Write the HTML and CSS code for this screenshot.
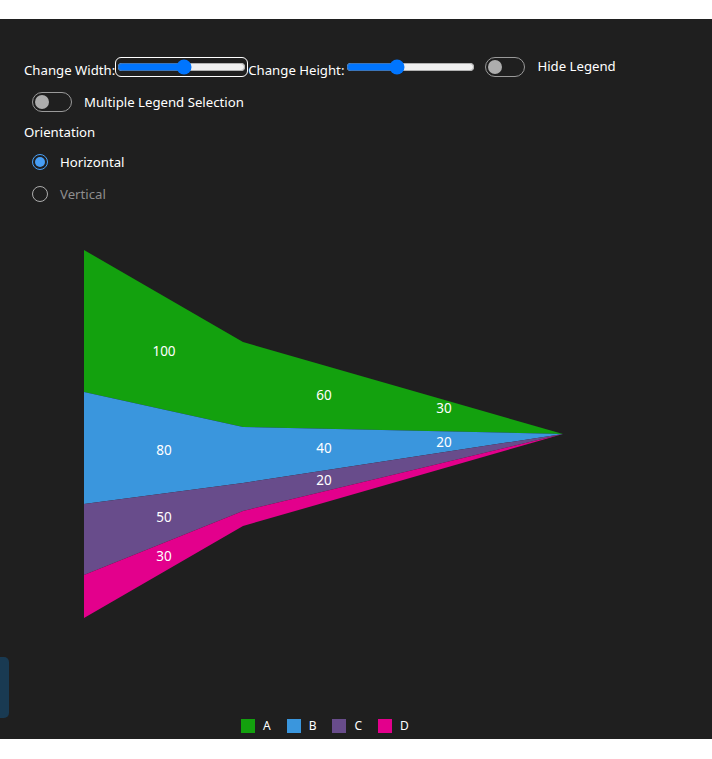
FILE: index.html
```html
<!DOCTYPE html>
<html>
<head>
<meta charset="utf-8">
<link rel="stylesheet" href="styles.css">
</head>
<body>
<div class="app">
  <div class="controls">
    <div class="row row-first">
      <span class="lbl lbl-low">Change Width:</span>
      <input type="range" class="range range-focus" min="0" max="100" value="52">
      <span class="lbl lbl-low">Change Height:</span>
      <input type="range" class="range" min="0" max="100" value="38">
      <span class="toggle toggle-a"><span class="knob"></span></span>
      <span class="lbl toggle-lbl lbl-up">Hide Legend</span>
    </div>
    <div class="row row-second">
      <span class="toggle toggle-b"><span class="knob"></span></span>
      <span class="lbl toggle-lbl">Multiple Legend Selection</span>
    </div>
    <div class="orient">Orientation</div>
    <div class="radios">
      <div class="radio-row"><span class="radio checked"><span class="dot"></span></span><span class="lbl">Horizontal</span></div>
      <div class="radio-row"><span class="radio"></span><span class="lbl muted">Vertical</span></div>
    </div>
  </div>
  <svg class="chart" width="712" height="490" viewBox="0 0 712 490">
    <polygon points="84,30 243,122 563,214 243,207 84,172" fill="#13a10e"/>
    <polygon points="84,172 243,207 563,214 243,263 84,284" fill="#3a96dd"/>
    <polygon points="84,284 243,263 563,214 243,291 84,355" fill="#684c8b"/>
    <polygon points="84,355 243,291 563,214 243,306 84,398" fill="#e3008c"/>
    <g class="vals">
      <text x="164" y="131">100</text>
      <text x="164" y="230">80</text>
      <text x="164" y="297">50</text>
      <text x="164" y="336">30</text>
      <text x="324" y="175">60</text>
      <text x="324" y="228">40</text>
      <text x="324" y="260">20</text>
      <text x="444" y="188">30</text>
      <text x="444" y="222">20</text>
    </g>
  </svg>
  <div class="legend">
    <div class="leg"><span class="sw sw-a"></span><span>A</span></div>
    <div class="leg"><span class="sw sw-b"></span><span>B</span></div>
    <div class="leg"><span class="sw sw-c"></span><span>C</span></div>
    <div class="leg"><span class="sw sw-d"></span><span>D</span></div>
  </div>
  <div class="side-tab"></div>
</div>
</body>
</html>
```
FILE: styles.css
```css
html, body {
  margin: 0;
  padding: 0;
  background: #ffffff;
}
body {
  font-family: "Noto Sans", "Open Sans", sans-serif;
  font-size: 13.2px;
  color: #ffffff;
}
.app {
  position: relative;
  margin-top: 19px;
  height: 720px;
  background: #1f1f1f;
  overflow: hidden;
}
.controls {
  padding: 38px 24px 0 24px;
}
.row {
  display: flex;
  align-items: center;
  height: 20px;
}
.lbl {
  white-space: nowrap;
  line-height: 20px;
}
.lbl-low {
  align-self: flex-end;
  line-height: 14px;
}
.lbl-up {
  position: relative;
  top: -1px;
}
.range {
  width: 129px;
  height: 16px;
  margin: 0 2px;
  accent-color: #0075ff;
}
.range-focus {
  outline: 1px solid #ffffff;
  outline-offset: 1px;
  border-radius: 4px;
}
.toggle {
  display: inline-flex;
  align-items: center;
  box-sizing: border-box;
  width: 40px;
  height: 20px;
  border: 1px solid #9a9a9a;
  border-radius: 10px;
  padding-left: 2px;
}
.knob {
  width: 14px;
  height: 14px;
  border-radius: 50%;
  background: #adadad;
}
.toggle-a {
  margin-left: 8px;
}
.toggle-lbl {
  margin-left: 12px;
}
.row-second {
  margin-top: 15px;
  padding-left: 8px;
}
.orient {
  margin-top: 10px;
  line-height: 20px;
}
.radios {
  margin-top: 10px;
  display: flex;
  flex-direction: column;
  gap: 12px;
}
.radio-row {
  display: flex;
  align-items: center;
  height: 20px;
  padding-left: 8px;
}
.radio {
  box-sizing: border-box;
  width: 16px;
  height: 16px;
  border: 1px solid #adadad;
  border-radius: 50%;
  display: inline-flex;
  align-items: center;
  justify-content: center;
  margin-right: 12px;
}
.radio.checked {
  border-color: #479ef5;
}
.dot {
  width: 10px;
  height: 10px;
  border-radius: 50%;
  background: #479ef5;
}
.muted {
  color: #8e8e8e;
}
.chart {
  display: block;
  margin-top: 16px;
}
.vals text {
  fill: #ffffff;
  font-family: "Noto Sans", "Open Sans", sans-serif;
  font-size: 13.5px;
  text-anchor: middle;
  dominant-baseline: central;
}
.legend {
  display: flex;
  align-items: center;
  gap: 16px;
  margin-top: 9px;
  padding-left: 241px;
  font-size: 12px;
}
.leg {
  display: flex;
  align-items: center;
  gap: 8px;
  line-height: 14px;
}
.sw {
  width: 14px;
  height: 14px;
  display: inline-block;
}
.sw-a { background: #13a10e; }
.sw-b { background: #3a96dd; }
.sw-c { background: #684c8b; }
.sw-d { background: #e3008c; }
.side-tab {
  position: absolute;
  left: 0;
  top: 638px;
  width: 9px;
  height: 61px;
  background: #193a52;
  border-radius: 0 5px 5px 0;
}
```
